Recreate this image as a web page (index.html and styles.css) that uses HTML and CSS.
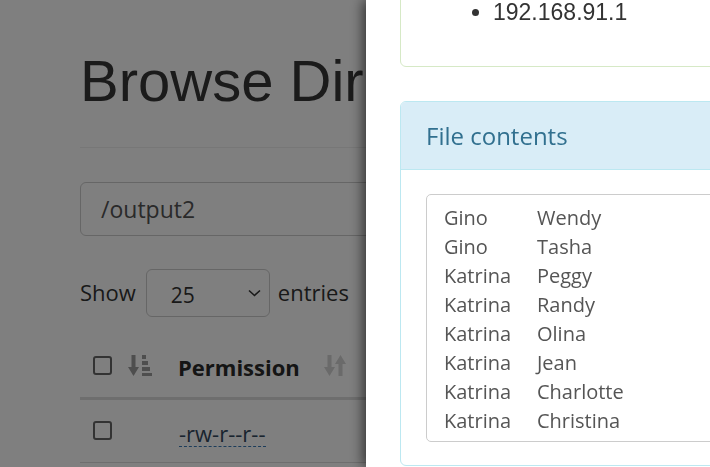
FILE: index.html
```html
<!DOCTYPE html>
<html>
<head>
<meta charset="utf-8">
<link rel="stylesheet" href="styles.css">
</head>
<body>
<div class="page">
  <h1 class="title">Browse Directory</h1>
  <hr class="rule">
  <div class="path-input">/output2</div>
  <div class="length-row">
    <span>Show</span>
    <span class="select"><span>25</span>
      <svg class="chev" width="13" height="8" viewBox="0 0 13 8"><path d="M1 1.5 L6.5 6.5 L12 1.5" fill="none" stroke="#333" stroke-width="1.6"/></svg>
    </span>
    <span>entries</span>
  </div>
  <div class="thead">
    <span class="check"></span>
    <svg class="sort-a" width="25" height="23" viewBox="0 0 25 23">
      <rect x="3.5" y="1" width="4" height="14" fill="#9c9c9c"/>
      <path d="M0 13 L11 13 L5.5 22 Z" fill="#9c9c9c"/>
      <rect x="14" y="1" width="4" height="4" fill="#9c9c9c"/>
      <rect x="14" y="7" width="6" height="4" fill="#9c9c9c"/>
      <rect x="14" y="13" width="8" height="4" fill="#9c9c9c"/>
      <rect x="14" y="19" width="10" height="3" fill="#9c9c9c"/>
    </svg>
    <span class="th-label">Permission</span>
    <svg class="sort-b" width="22" height="23" viewBox="0 0 22 23">
      <rect x="3.5" y="1" width="4" height="14" fill="#d4d4d4"/>
      <path d="M0 13 L11 13 L5.5 22 Z" fill="#d4d4d4"/>
      <rect x="14.5" y="8" width="4" height="14" fill="#d4d4d4"/>
      <path d="M11 10 L22 10 L16.5 1 Z" fill="#d4d4d4"/>
    </svg>
  </div>
  <div class="trow">
    <span class="check"></span>
    <span class="perm">-rw-r--r--</span>
  </div>
</div>

<div class="backdrop"></div>

<div class="modal">
  <div class="panel panel-success">
    <ul class="hosts"><li>192.168.91.1</li></ul>
  </div>
  <div class="panel panel-info">
    <div class="panel-heading">File contents</div>
    <div class="panel-body">
      <div class="contents">
        <span>Gino</span><span>Wendy</span>
        <span>Gino</span><span>Tasha</span>
        <span>Katrina</span><span>Peggy</span>
        <span>Katrina</span><span>Randy</span>
        <span>Katrina</span><span>Olina</span>
        <span>Katrina</span><span>Jean</span>
        <span>Katrina</span><span>Charlotte</span>
        <span>Katrina</span><span>Christina</span>
      </div>
    </div>
  </div>
</div>
</body>
</html>
```

FILE: styles.css
```css
html, body {
  margin: 0;
  padding: 0;
  background: #fff;
  overflow: hidden;
}
body {
  font-family: "Open Sans", "Liberation Sans", sans-serif;
  color: #333;
  width: 710px;
  height: 467px;
}
.page {
  padding: 49px 0 0 80px;
}
.title {
  margin: 0;
  font-family: "Liberation Sans", Arial, sans-serif;
  font-weight: 400;
  font-size: 58px;
  line-height: 64px;
  color: #363636;
  white-space: nowrap;
}
.rule {
  margin: 34px 0 0 0;
  border: 0;
  border-top: 1px solid #eee;
  width: 700px;
}
.path-input {
  margin-top: 34px;
  box-sizing: border-box;
  width: 620px;
  height: 54px;
  border: 1px solid #ccc;
  border-radius: 6px;
  padding-left: 20px;
  display: flex;
  align-items: center;
  font-size: 23px;
  color: #555;
}
.length-row {
  margin-top: 33px;
  display: flex;
  align-items: center;
  font-size: 22px;
  color: #333;
}
.length-row > span:first-child,
.length-row > span:last-child {
  margin-top: -3px;
}
.select {
  box-sizing: border-box;
  width: 124px;
  height: 48px;
  margin: 0 8px 0 10px;
  border: 1px solid #ccc;
  border-radius: 6px;
  display: flex;
  align-items: center;
  justify-content: space-between;
  padding: 3px 8px 0 24px;
  font-size: 21px;
}
.chev {
  margin-top: -4px;
}
.thead {
  margin-top: 16px;
  height: 64px;
  width: 640px;
  border-bottom: 3px solid #ddd;
  display: flex;
  align-items: center;
}
.check {
  box-sizing: border-box;
  width: 19px;
  height: 19px;
  border: 2px solid #666;
  border-radius: 3px;
  margin-left: 13px;
  background: #fff;
}
.sort-a {
  margin-left: 16px;
  margin-top: 0;
}
.th-label {
  margin-left: 25px;
  font-weight: 700;
  font-size: 22px;
  color: #2a2a2a;
  margin-top: 4px;
}
.sort-b {
  margin-left: 24px;
  margin-top: 0;
}
.trow {
  height: 62px;
  width: 640px;
  border-bottom: 1px solid #ddd;
  display: flex;
  align-items: center;
}
.trow .check {
  margin-top: -1px;
}
.perm {
  margin-left: 67px;
  font-size: 22px;
  color: #34495e;
  line-height: 26px;
  border-bottom: 1px dashed #3a7ab7;
  margin-top: 4px;
}
.backdrop {
  position: fixed;
  inset: 0;
  background: rgba(0, 0, 0, 0.5);
}
.modal {
  position: fixed;
  top: 0;
  left: 366px;
  right: 0;
  bottom: 0;
  background: #fff;
  box-shadow: -3px 0 12px rgba(0, 0, 0, 0.6);
  overflow: hidden;
  padding-left: 34px;
}
.panel {
  box-sizing: border-box;
  width: 420px;
  border: 1px solid #ddd;
  border-radius: 6px;
  background: #fff;
}
.panel-success {
  border-color: #d6e9c6;
  height: 128px;
  margin-top: -61px;
  padding-top: 57px;
}
.hosts {
  margin: 0;
  padding-left: 92px;
  font-family: "Liberation Sans", Arial, sans-serif;
  font-size: 23px;
  line-height: 30px;
  color: #333;
}
.panel-info {
  margin-top: 34px;
  border-color: #bce8f1;
}
.panel-heading {
  background: #d9edf7;
  border-bottom: 1px solid #bce8f1;
  border-radius: 5px 5px 0 0;
  color: #31708f;
  font-size: 24px;
  line-height: 26px;
  padding: 21px 25px 20px 25px;
}
.panel-body {
  padding: 24px 25px 23px 25px;
}
.contents {
  box-sizing: border-box;
  height: 248px;
  border: 1px solid #ccc;
  border-radius: 5px;
  padding: 8px 0 0 17px;
  display: grid;
  grid-template-columns: 93px auto;
  grid-auto-rows: 29px;
  align-content: start;
  justify-content: start;
  font-size: 20px;
  line-height: 29px;
  color: #555;
}
```
